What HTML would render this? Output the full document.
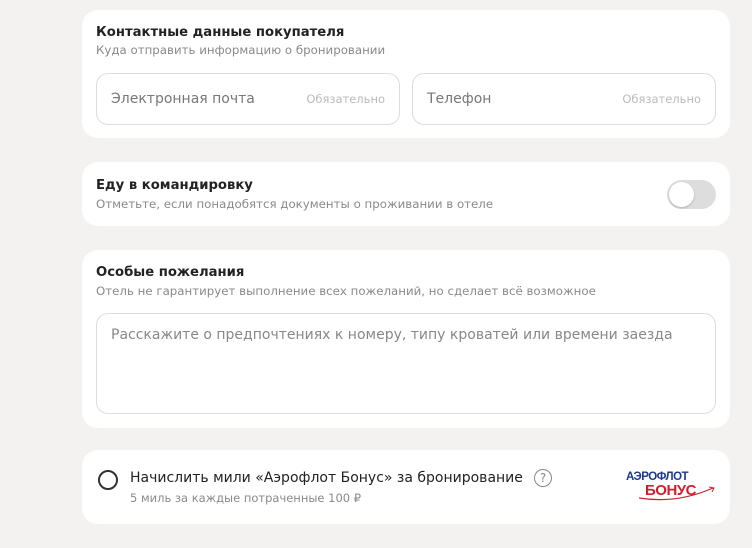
<!DOCTYPE html>
<html><head><meta charset="utf-8"><style>
body{margin:0;width:752px;height:548px;background:#f3f2f1;font-family:"DejaVu Sans",sans-serif;position:relative;overflow:hidden}
.card{position:absolute;left:82px;width:648px;background:#fff;border-radius:16px}
.t{position:absolute;left:14px;font-size:13.2px;font-weight:bold;color:#222}
.s{position:absolute;left:14px;font-size:11.8px;color:#8a8a8a}
.in{position:absolute;border:1px solid #ddd;border-radius:12px;background:#fff}
.ph{position:absolute;font-size:14px;color:#777}
.req{position:absolute;right:14px;top:18px;font-size:11.5px;color:#bbb}
</style></head><body>
<div class="card" style="top:10px;height:128px">
 <div class="t" style="top:15px">Контактные данные покупателя</div>
 <div class="s" style="top:33px">Куда отправить информацию о бронировании</div>
 <div class="in" style="left:14px;top:63px;width:302px;height:50px"><span class="ph" style="left:14px;top:17px">Электронная почта</span><span class="req">Обязательно</span></div>
 <div class="in" style="left:330px;top:63px;width:302px;height:50px"><span class="ph" style="left:14px;top:17px">Телефон</span><span class="req">Обязательно</span></div>
</div>
<div class="card" style="top:162px;height:64px">
 <div class="t" style="top:16px">Еду в командировку</div>
 <div class="s" style="top:35px">Отметьте, если понадобятся документы о проживании в отеле</div>
 <div style="position:absolute;left:585px;top:18px;width:49px;height:29px;border-radius:15px;background:#ddd"><div style="position:absolute;left:2px;top:2px;width:25px;height:25px;border-radius:50%;background:#fff;box-shadow:0 1px 2px rgba(0,0,0,.2)"></div></div>
</div>
<div class="card" style="top:250px;height:178px">
 <div class="t" style="top:15px">Особые пожелания</div>
 <div class="s" style="top:34px">Отель не гарантирует выполнение всех пожеланий, но сделает всё возможное</div>
 <div class="in" style="left:14px;top:63px;width:618px;height:99px"><span class="ph" style="left:14px;top:13px;color:#888">Расскажите о предпочтениях к номеру, типу кроватей или времени заезда</span></div>
</div>
<div class="card" style="top:450px;height:74px">
 <div style="position:absolute;left:16px;top:20px;width:16px;height:16px;border:2px solid #333;border-radius:50%"></div>
 <div style="position:absolute;left:48px;top:20px;font-size:14px;color:#222">Начислить мили «Аэрофлот Бонус» за бронирование</div>
 <div style="position:absolute;left:452px;top:19px;width:16px;height:16px;border:1.5px solid #888;border-radius:50%;font-size:12px;color:#888;text-align:center;line-height:16px">?</div>
 <div style="position:absolute;left:48px;top:41px;font-size:11.5px;color:#8a8a8a">5 миль за каждые потраченные 100 ₽</div>
 <div style="position:absolute;left:544px;top:21px;font-family:'Liberation Sans',sans-serif;font-size:11.5px;font-weight:bold;color:#1d3a8a;letter-spacing:-.5px">АЭРОФЛОТ</div>
 <div style="position:absolute;left:563px;top:32px;font-family:'Liberation Sans',sans-serif;font-size:15px;font-weight:bold;color:#d0202e;letter-spacing:-.5px">БОНУС</div>
 <svg style="position:absolute;left:555px;top:30px" width="80" height="24"><path d="M2 18 Q40 24 76 8" stroke="#d0202e" stroke-width="1.2" fill="none"/><path d="M72 7 L77 8 L75 12" stroke="#d0202e" fill="none"/></svg>
</div>
</body></html>
